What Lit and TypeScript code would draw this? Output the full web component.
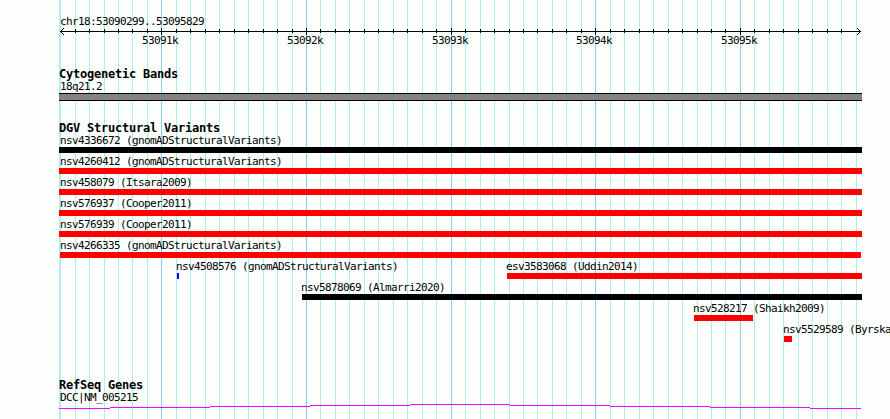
// app.ts - Genome browser track view
import { LitElement, html, svg, css } from 'lit';
import { customElement, property } from 'lit/decorators.js';

interface Feature {
  label: string;
  start: number;
  width: number;
  color: 'black' | 'red' | 'blue';
  labelStart?: number;
}

// One entry per row, x values are in panel pixels
const VARIANT_ROWS: Feature[][] = [
  [{ label: 'nsv4336672 (gnomADStructuralVariants)', start: 59, width: 803, color: 'black', labelStart: 60 }],
  [{ label: 'nsv4260412 (gnomADStructuralVariants)', start: 59, width: 803, color: 'red', labelStart: 60 }],
  [{ label: 'nsv458079 (Itsara2009)', start: 59, width: 803, color: 'red', labelStart: 60 }],
  [{ label: 'nsv576937 (Cooper2011)', start: 59, width: 803, color: 'red', labelStart: 60 }],
  [{ label: 'nsv576939 (Cooper2011)', start: 59, width: 803, color: 'red', labelStart: 60 }],
  [{ label: 'nsv4266335 (gnomADStructuralVariants)', start: 60, width: 801, color: 'red' }],
  [
    { label: 'nsv4508576 (gnomADStructuralVariants)', start: 177, width: 2, color: 'blue', labelStart: 176 },
    { label: 'esv3583068 (Uddin2014)', start: 507, width: 355, color: 'red', labelStart: 506 }
  ],
  [{ label: 'nsv5878069 (Almarri2020)', start: 302, width: 560, color: 'black', labelStart: 301 }],
  [{ label: 'nsv528217 (Shaikh2009)', start: 694, width: 59, color: 'red', labelStart: 693 }],
  [{ label: 'nsv5529589 (Byrska-Bishop2022)', start: 784, width: 8, color: 'red', labelStart: 783 }]
];

const TICKS = Array.from({ length: 56 }, (_, i) => ({
  x: Math.floor(60.62 + i * 14.464),
  major: i % 10 === 7
}));

@customElement('feature-row')
export class FeatureRow extends LitElement {
  @property({ attribute: false }) features: Feature[] = [];

  static override styles = css`
    :host {
      display: grid;
      height: 21px;
    }

    .feature {
      grid-area: 1 / 1;
      display: flex;
      flex-direction: column;
    }

    .label {
      height: 13px;
      line-height: 13px;
      white-space: pre;
    }

    .bar {
      height: 6px;
    }

    .black {
      background: #000004;
    }

    .red {
      background: #ff0000;
    }

    .blue {
      background: #0000ff;
    }
  `;

  override render() {
    return this.features.map(
      (f) => html`
        <div class="feature">
          <span class="label" style="margin-left: ${f.labelStart ?? f.start}px">${f.label}</span>
          <div class="bar ${f.color}" style="margin-left: ${f.start}px; width: ${f.width}px"></div>
        </div>
      `
    );
  }
}

@customElement('app-root')
export class AppRoot extends LitElement {
  static override styles = css`
    :host {
      display: block;
      position: relative;
      width: 890px;
      height: 419px;
      overflow: hidden;
      background: #fcfffc;
      color: #000;
      font: 11px/13px 'DejaVu Sans Mono', monospace;
      letter-spacing: -0.623px;
    }

    svg {
      display: block;
      shape-rendering: crispEdges;
    }

    /* The grid lies behind all of the tracks */
    .grid {
      position: absolute;
      inset: 0;
    }

    .minor {
      fill: #afeeee;
    }

    .major {
      fill: #87ceeb;
    }

    .panel {
      position: relative;
      display: flex;
      flex-direction: column;
      padding-top: 15px;
    }

    .text {
      height: 13px;
      padding-left: 60px;
      white-space: pre;
    }

    h2 {
      margin: 0;
      height: 12px;
      padding-left: 59px;
      font: bold 12px/12px 'DejaVu Sans Mono', monospace;
      letter-spacing: -0.224px;
      white-space: pre;
    }

    .ruler {
      height: 40px;
    }

    .cyto {
      display: flex;
      flex-direction: column;
    }

    .band {
      box-sizing: border-box;
      width: 803px;
      height: 8px;
      margin-left: 59px;
      border-top: 1px solid #000;
      border-bottom: 1px solid #000;
      background: #848284;
    }

    .variants {
      padding-top: 21px;
    }

    .genes {
      padding-top: 35px;
    }

    .arrow {
      fill: none;
      stroke: #000;
    }
  `;

  private renderGrid() {
    return html`
      <svg class="grid" width="890" height="419">
        <rect class="minor" x="59" y="0" width="1" height="419" />
        ${TICKS.map(
          (t) => svg`<rect class=${t.major ? 'major' : 'minor'} x=${t.x} y="0" width="1" height="419" />`
        )}
      </svg>
    `;
  }

  private renderRuler() {
    return html`
      <svg class="ruler" width="890" height="40">
        <rect x="60" y="3" width="801" height="1" />
        ${TICKS.slice(1, -1).map(
          (t) => svg`<rect x=${t.x} y=${t.major ? 0 : 1} width="1" height=${t.major ? 7 : 4} />`
        )}
        <path class="arrow" d="M64 0 L60.5 3.5 L64 7 M857 0 L860.5 3.5 L857 7" />
        ${TICKS.filter((t) => t.major).map(
          (t, i) => svg`<text x=${t.x - 19} y="16">${53091 + i}k</text>`
        )}
      </svg>
    `;
  }

  private renderGenes() {
    // Gentle hat shape, stepping one pixel every hundred
    return html`
      <svg width="890" height="15" fill="#ff00ff">
        <rect x="59" y="4" width="51" height="1" />
        ${[3, 2, 1, 0, 1, 2, 3].map(
          (y, i) => svg`<rect x=${110 + i * 100} y=${y} width="100" height="1" />`
        )}
        <rect x="810" y="4" width="51" height="1" />
      </svg>
    `;
  }

  override render() {
    return html`
      ${this.renderGrid()}
      <div class="panel">
        <div class="text">chr18:53090299..53095829</div>
        ${this.renderRuler()}
        <section class="cyto">
          <h2>Cytogenetic Bands</h2>
          <div class="text">18q21.2</div>
          <div class="band"></div>
        </section>
        <section class="variants">
          <h2>DGV Structural Variants</h2>
          ${VARIANT_ROWS.map((row) => html`<feature-row .features=${row}></feature-row>`)}
        </section>
        <section class="genes">
          <h2>RefSeq Genes</h2>
          <div class="text">DCC|NM_005215</div>
          ${this.renderGenes()}
        </section>
      </div>
    `;
  }
}

declare global {
  interface HTMLElementTagNameMap {
    'app-root': AppRoot;
    'feature-row': FeatureRow;
  }
}
